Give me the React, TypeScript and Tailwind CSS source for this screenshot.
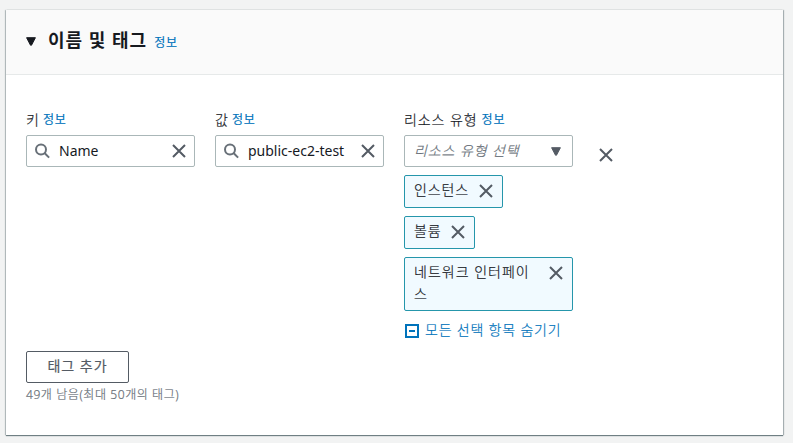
import type { ReactNode } from "react";

function CloseIcon() {
  return (
    <svg width="14" height="14" viewBox="0 0 14 14" className="block shrink-0" fill="none" stroke="#545b64" strokeWidth="2">
      <path d="M1 1l12 12M13 1L1 13" />
    </svg>
  );
}

function SearchIcon() {
  return (
    <svg width="16" height="16" viewBox="0 0 16 16" className="block shrink-0" fill="none" stroke="#687078" strokeWidth="2">
      <circle cx="6" cy="6.5" r="5" />
      <path d="M9.5 10l4.6 4.6" />
    </svg>
  );
}

function CaretIcon({ className = "" }: { className?: string }) {
  return (
    <svg width="11" height="9" viewBox="0 0 11 9" className={`block shrink-0 ${className}`} fill="currentColor" stroke="currentColor" strokeLinejoin="round">
      <path d="M0.6 0.7h8.8L5.5 8.2h-1z" />
    </svg>
  );
}

function Info({ className = "" }: { className?: string }) {
  return (
    <a className={`text-[12px] leading-[16px] font-normal tracking-[0.9px] text-[#0073bb] [-webkit-text-stroke:0.15px_#0073bb] ${className}`}>정보</a>
  );
}

function Label({ children, className = "" }: { children: ReactNode; className?: string }) {
  return (
    <div className="flex h-[22px] items-center whitespace-nowrap">
      <span className={`text-[14px] leading-[22px] font-light [-webkit-text-stroke:0.2px_#16191f] ${className}`}>{children}</span>
      <Info className="ml-1" />
    </div>
  );
}

function SearchField({ value }: { value: string }) {
  return (
    <div className="mt-1 flex h-8 items-center rounded-[2px] border border-[#aab7b8] bg-white pr-2 pl-2">
      <SearchIcon />
      <span className="ml-2 flex-1 text-[14px] leading-[22px] whitespace-nowrap">{value}</span>
      <CloseIcon />
    </div>
  );
}

function Token({ children, className = "" }: { children: ReactNode; className?: string }) {
  return (
    <div className={`flex items-start justify-between rounded-[2px] border border-[#2596ab] bg-[#f1faff] pt-[3px] pr-[9px] pl-[9px] text-[14px] leading-[22px] font-light [-webkit-text-stroke:0.2px_#16191f] ${className}`}>
      <span>{children}</span>
      <span className="pt-[5px]">
        <CloseIcon />
      </span>
    </div>
  );
}

export default function App() {
  return (
    <div className="h-[443px] w-[793px] bg-[#f2f3f3] pt-[10px] pl-[6px] font-['Noto_Sans','Noto_Sans_CJK_KR',sans-serif] text-[#16191f]">
      <section className="h-[425px] w-[777px] bg-white shadow-[0_1px_1px_0_rgba(0,28,36,0.5),1px_0_1px_0_rgba(0,28,36,0.25),-1px_0_1px_0_rgba(0,28,36,0.2)]">
        <header className="flex h-[65px] items-center border-b border-[#e6e9e9] bg-[#fafafa] pb-1 pl-5">
          <CaretIcon className="mt-[2px]" />
          <h2 className="ml-[11px] text-[18px] leading-[22px] font-bold tracking-[1px] whitespace-nowrap">이름 및 태그</h2>
          <Info className="mt-[5px] ml-[7px]" />
        </header>

        <div className="px-5 pt-[34px]">
          <div className="flex gap-5">
            <div className="w-[169px]">
              <Label>키</Label>
              <SearchField value="Name" />
            </div>
            <div className="w-[169px]">
              <Label>값</Label>
              <SearchField value="public-ec2-test" />
            </div>
            <div className="w-[169px]">
              <Label className="tracking-[0.9px]">리소스 유형</Label>
              <div className="mt-1 flex h-8 items-center justify-between rounded-[2px] border border-[#aab7b8] pr-[10px] pl-[9px]">
                <span className="text-[14px] leading-[22px] font-light tracking-[0.9px] text-[#687078] italic [-webkit-text-stroke:0.2px_#687078]">리소스 유형 선택</span>
                <CaretIcon className="text-[#545b64]" />
              </div>
              <Token className="mt-2 h-[33px] w-[99px] tracking-[0.9px]">인스턴스</Token>
              <Token className="mt-2 h-[33px] w-[71px] tracking-[0.9px]">볼륨</Token>
              <Token className="mt-2 h-[54px] w-[169px] tracking-[1px]">
                네트워크 인터페이
                <br />스
              </Token>
              <div className="mt-2 flex h-[22px] items-center text-[14px] leading-[22px] font-light tracking-[0.8px] whitespace-nowrap text-[#0073bb] [-webkit-text-stroke:0.2px_#0073bb]">
                <svg width="14" height="14" viewBox="0 0 14 14" className="mt-px mr-[6px] ml-[1px] block shrink-0" fill="none" stroke="#0073bb" strokeWidth="2">
                  <path d="M1 1h12v12H1zM4 7h6" />
                </svg>
                모든 선택 항목 숨기기
              </div>
            </div>
            <div className="pt-[39px] pl-[6px]">
              <CloseIcon />
            </div>
          </div>

          <button className="mt-[10px] flex h-8 w-[103px] items-center justify-center rounded-[2px] border border-[#545b64] pb-[2px] text-[14px] leading-[22px] font-normal tracking-[1px] text-[#545b64] [-webkit-text-stroke:0.2px_#545b64]">
            태그 추가
          </button>
          <p className="mt-1 text-[12px] leading-[16px] font-light tracking-[0.58px] whitespace-nowrap text-[#687078] [-webkit-text-stroke:0.2px_#687078]">49개 남음(최대 50개의 태그)</p>
        </div>
      </section>
    </div>
  );
}
